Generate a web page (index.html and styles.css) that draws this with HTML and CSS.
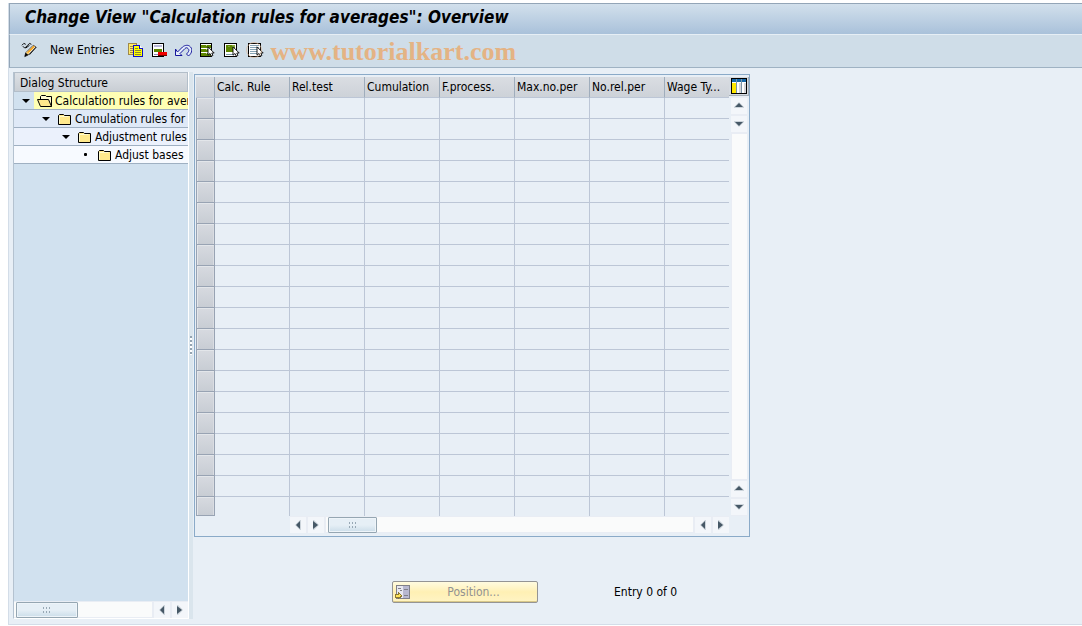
FILE: index.html
```html
<!DOCTYPE html>
<html lang="en">
<head>
<meta charset="utf-8">
<title>Change View "Calculation rules for averages": Overview</title>
<link rel="stylesheet" href="styles.css">
</head>
<body>
<svg class="defs" aria-hidden="true">
  <symbol id="left" viewBox="0 0 16 16"><path d="M10 3h1v10h-1l-5-5z" fill="#cbd3da"/><path d="M10 4v8L6 8z" fill="#465866"/></symbol>
  <symbol id="right" viewBox="0 0 16 16"><path d="M5 3h1l5 5-5 5H5z" fill="#cbd3da"/><path d="M5 4v8l5-4z" fill="#465866"/></symbol>
  <symbol id="up" viewBox="0 0 16 16"><path d="M3 9l5-5 5 5v1H3z" fill="#cbd3da"/><path d="M4 9h8L8 5z" fill="#465866"/></symbol>
  <symbol id="down" viewBox="0 0 16 16"><path d="M3 5h10v1l-5 5-5-5z" fill="#cbd3da"/><path d="M4 6h8l-4 4z" fill="#465866"/></symbol>
  <symbol id="folder" viewBox="0 0 16 14"><path d="M1.500 12.500v-9l1-1h4l1 1h6v9z" fill="#ffe98c" stroke="#000"/><path d="M2.500 11.500v-7h9" fill="none" stroke="#fffbd0"/></symbol>
  <symbol id="cursor" viewBox="0 0 8 11"><path d="M1 .8v8.400l2-1.700 1.300 2.700 1.600-.7-1.100-2.500h2.400z" fill="#fff" stroke="#000" stroke-width=".9" shape-rendering="geometricPrecision"/></symbol>
</svg>
<div class="window">
  <header class="title"><h1>Change View "Calculation rules for averages": Overview</h1></header>
  <div class="toolbar">
    <button class="tool" aria-label="Display or change">
      <svg width="17" height="16" viewBox="0 0 18 16"><path d="M1 3l2-2 2 1M2 4l2 2 3-3 2-2 2 1M5 6l4-3" fill="none" stroke="#000"/><path d="M5 11l8-8 3 2-8 8-4 2z" fill="#fff" stroke="#333"/><path d="M7 11l7-7" stroke="#f5a623" stroke-width="2"/><path d="M9 13l7-8" stroke="#111"/><path d="M4 15l1-4 3 2z" fill="#000"/><path d="M6 10l2 2" stroke="#f8c45a" stroke-width="2"/></svg>
    </button>
    <button class="tool text">New Entries</button>
    <button class="tool" aria-label="Copy as">
      <svg width="17" height="16" viewBox="0 0 17 16" shape-rendering="crispEdges"><path d="M1 1h8v11H1z" fill="#ffe96a"/><path d="M1.500 1.500h8v11h-8z" fill="none" stroke="#a08a48"/><path d="M3 4h5M3 6h4M3 8h4M3 10h4" stroke="#a08a48"/><path d="M6.500 3.500h6l3 3v8h-9z" fill="#ff0" stroke="#1010c8"/><path d="M12.500 3.500v3h3" fill="#fff" stroke="#1010c8"/><path d="M8 6.500h3M8 8.500h6M8 10.500h6M8 12.500h6" stroke="#8a8a30"/></svg>
    </button>
    <button class="tool" aria-label="Delete">
      <svg width="17" height="16" viewBox="0 0 17 16" shape-rendering="crispEdges"><path d="M1.500 1.500h11v13h-11z" fill="#fff" stroke="#000"/><path d="M3 3h8v2H3z" fill="#b8b8d8"/><path d="M3 7h8v3H3z" fill="#5d8500"/><path d="M3 12h4v1H3z" fill="#8888b8"/><path d="M7 10h9v3H7z" fill="#f00000"/><path d="M7 13h9v1H7z" fill="#700000"/></svg>
    </button>
    <button class="tool" aria-label="Undo change">
      <svg width="17" height="15" viewBox="0 0 17 15"><path d="M.5 6v6.500h6.500l-2-2 5-5c1-1 2-1 3 0 1.500 1.500 1 3-1.500 5.500l2 2c4-3.500 4-7 2-9-2-2.500-5.500-2-8 0L2.500 9z" fill="#e4eefb" stroke="#16169c"/></svg>
    </button>
    <button class="tool" aria-label="Select all">
      <svg width="17" height="16" viewBox="0 0 17 16" shape-rendering="crispEdges"><path d="M1.500 1.500h11v13h-11z" fill="#fff" stroke="#000"/><path d="M2 3h10v3H2zM2 7h10v3H2zM2 11h10v3H2z" fill="#5d8500"/><path d="M7 3h1v1H7zM7 7h1v1H7zM7 11h1v1H7z" fill="#b9d070"/><use href="#cursor" x="8" y="4" width="8" height="11"/></svg>
    </button>
    <button class="tool" aria-label="Select block">
      <svg width="17" height="16" viewBox="0 0 17 16" shape-rendering="crispEdges"><path d="M1.500 1.500h12v13h-12z" fill="#fff" stroke="#000"/><path d="M3 3h9v7H3z" fill="#5d8500"/><path d="M5 4h2v1H5zM9 3h3v2H9z" fill="#86a83a"/><path d="M3 12h7v1H3z" fill="#7898a8"/><use href="#cursor" x="9" y="4" width="8" height="11"/></svg>
    </button>
    <button class="tool" aria-label="Deselect all">
      <svg width="17" height="16" viewBox="0 0 17 16" shape-rendering="crispEdges"><path d="M1.500 1.500h12v13h-12z" fill="#fff" stroke="#000"/><path d="M3 3.500h9M3 5.500h9M3 7.500h7M3 9.500h7M3 11.500h7" stroke="#87a4b5"/><use href="#cursor" x="9" y="4" width="8" height="11"/></svg>
      <span class="ring"></span>
    </button>
    <span class="watermark">www.tutorialkart.com</span>
  </div>
  <main class="work">
    <aside class="dialog">
      <h2>Dialog Structure</h2>
      <ul class="tree">
        <li class="level1"><button class="twist" aria-label="Collapse"></button><a href="#"><svg width="16" height="14" viewBox="0 0 16 14"><path d="M3.500 7V2.500l1-1h4l1 1h5v10" fill="#fffbd0" stroke="#000"/><path d="M.5 5.500h11l3 7h-11z" fill="#ffe98c" stroke="#000"/></svg>Calculation rules for aver</a></li>
        <li class="level2"><button class="twist" aria-label="Collapse"></button><a href="#"><svg width="16" height="14"><use href="#folder"/></svg>Cumulation rules for</a></li>
        <li class="level3"><button class="twist" aria-label="Collapse"></button><a href="#"><svg width="16" height="14"><use href="#folder"/></svg>Adjustment rules</a></li>
        <li class="level4"><span class="dot"></span><a href="#"><svg width="16" height="14"><use href="#folder"/></svg>Adjust bases</a></li>
      </ul>
      <div class="hbar">
        <div class="track"><div class="thumb wide"><i></i></div></div>
        <button class="arrow" aria-label="Scroll left"><svg><use href="#left"/></svg></button>
        <button class="arrow" aria-label="Scroll right"><svg><use href="#right"/></svg></button>
      </div>
    </aside>
    <div class="splitter"><i></i></div>
    <section class="content">
      <div class="gridbox">
        <table>
          <colgroup><col class="c-sel"><col class="c"><col class="c"><col class="c"><col class="c"><col class="c"><col class="c"><col></colgroup>
          <thead><tr><th class="sel"></th><th>Calc. Rule</th><th>Rel.test</th><th>Cumulation</th><th>F.process.</th><th>Max.no.per</th><th>No.rel.per</th><th>Wage Ty...</th></tr></thead>
          <tbody>
            <tr><td class="sel"></td><td></td><td></td><td></td><td></td><td></td><td></td><td></td></tr>
            <tr><td class="sel"></td><td></td><td></td><td></td><td></td><td></td><td></td><td></td></tr>
            <tr><td class="sel"></td><td></td><td></td><td></td><td></td><td></td><td></td><td></td></tr>
            <tr><td class="sel"></td><td></td><td></td><td></td><td></td><td></td><td></td><td></td></tr>
            <tr><td class="sel"></td><td></td><td></td><td></td><td></td><td></td><td></td><td></td></tr>
            <tr><td class="sel"></td><td></td><td></td><td></td><td></td><td></td><td></td><td></td></tr>
            <tr><td class="sel"></td><td></td><td></td><td></td><td></td><td></td><td></td><td></td></tr>
            <tr><td class="sel"></td><td></td><td></td><td></td><td></td><td></td><td></td><td></td></tr>
            <tr><td class="sel"></td><td></td><td></td><td></td><td></td><td></td><td></td><td></td></tr>
            <tr><td class="sel"></td><td></td><td></td><td></td><td></td><td></td><td></td><td></td></tr>
            <tr><td class="sel"></td><td></td><td></td><td></td><td></td><td></td><td></td><td></td></tr>
            <tr><td class="sel"></td><td></td><td></td><td></td><td></td><td></td><td></td><td></td></tr>
            <tr><td class="sel"></td><td></td><td></td><td></td><td></td><td></td><td></td><td></td></tr>
            <tr><td class="sel"></td><td></td><td></td><td></td><td></td><td></td><td></td><td></td></tr>
            <tr><td class="sel"></td><td></td><td></td><td></td><td></td><td></td><td></td><td></td></tr>
            <tr><td class="sel"></td><td></td><td></td><td></td><td></td><td></td><td></td><td></td></tr>
            <tr><td class="sel"></td><td></td><td></td><td></td><td></td><td></td><td></td><td></td></tr>
            <tr><td class="sel"></td><td></td><td></td><td></td><td></td><td></td><td></td><td></td></tr>
            <tr><td class="sel"></td><td></td><td></td><td></td><td></td><td></td><td></td><td></td></tr>
            <tr><td class="sel"></td><td></td><td></td><td></td><td></td><td></td><td></td><td></td></tr>
          </tbody>
        </table>
        <div class="vbar">
          <button class="config" aria-label="Configuration"><svg width="16" height="16" viewBox="0 0 16 16" shape-rendering="crispEdges"><path d="M1 1h14v14H1z" fill="#fff"/><path d="M1 1h14v3H1z" fill="#1668a8"/><path d="M1 5h4v10H1z" fill="#ffe800"/><path d="M6 5h4v10H6zM11 5h4v10h-4z" fill="#d5d5d9"/><path d="M5 1h1v14H5zM10 1h1v14h-1z" fill="#7a94a8"/><path d="M6 5h2v10H6zM11 5h2v10h-2z" fill="#fff"/><path d="M.5.5h15v15H.5z" fill="none" stroke="#000"/></svg></button>
          <button class="arrow" aria-label="Scroll up"><svg><use href="#up"/></svg></button>
          <button class="arrow" aria-label="Page up"><svg><use href="#down"/></svg></button>
          <div class="vtrack"></div>
          <button class="arrow" aria-label="Page down"><svg><use href="#up"/></svg></button>
          <button class="arrow" aria-label="Scroll down"><svg><use href="#down"/></svg></button>
        </div>
        <div class="hbar grid-hbar">
          <button class="arrow" aria-label="First column"><svg><use href="#left"/></svg></button>
          <button class="arrow" aria-label="Next column"><svg><use href="#right"/></svg></button>
          <div class="track"><div class="thumb"><i></i></div></div>
          <button class="arrow" aria-label="Previous column"><svg><use href="#left"/></svg></button>
          <button class="arrow" aria-label="Last column"><svg><use href="#right"/></svg></button>
        </div>
      </div>
      <div class="footer">
        <button class="position" disabled>
          <svg width="16" height="16" viewBox="0 0 16 16" shape-rendering="crispEdges"><path d="M2.500 1.500h13v13h-13z" fill="#e8e8f0" stroke="#808088"/><path d="M9 2h6v12H9z" fill="#b8b8d0"/><path d="M4 4h3M6 6h2M10 5h4M10 11h4" stroke="#808088"/><path d="M1 10h3V8l4 4-4 3v-2H1z" fill="#ffe45a" stroke="#8c7830"/></svg>
          <span>Position...</span>
        </button>
        <span>Entry 0 of 0</span>
      </div>
    </section>
  </main>
</div>
</body>
</html>
```
FILE: styles.css
```css
* { box-sizing: border-box; }
body {
  margin: 0;
  padding: 3px 0 1px 8px;
  min-height: 100vh;
  display: flex;
  background: #fff;
  color: #000;
  font: 12px/18px "DejaVu Sans Condensed", "DejaVu Sans", sans-serif;
}
.defs { display: none; }
button { margin: 0; padding: 0; border: 0; background: none; font: inherit; color: inherit; }
svg { display: block; flex: none; }
.window {
  flex: 1;
  min-width: 0;
  display: flex;
  flex-direction: column;
  border-left: 1px solid #d3dde8;
  border-bottom: 1px solid #d3dde8;
  background: #e8eff6;
}
.title {
  height: 31px;
  padding-left: 15px;
  border-top: 1px solid #93a5b7;
  border-left: 1px solid #93a5b7;
  background: linear-gradient(#d2e0ec, #a9c1da);
}
h1 { margin: 0; font-size: 17px; line-height: 26px; font-style: italic; font-weight: bold; white-space: nowrap; }
.toolbar {
  height: 34px;
  display: flex;
  align-items: center;
  padding: 0 0 2px 11px;
  gap: 7px;
  border-top: 1px solid #e6eef5;
  border-left: 1px solid #93a5b7;
  border-bottom: 1px solid #9fb2c3;
  background: #cfdde8;
}
.tool { position: relative; flex: none; }
.tool.text { margin: 0 5px; }
.ring { position: absolute; left: -1px; top: 0; width: 16px; height: 16px; border: 1px solid #e2b58e; border-radius: 50%; opacity: .6; }
.watermark { padding-top: 4px; font: bold 26px/28px "Liberation Serif", serif; color: #e4b384; }
.work { flex: 1; display: flex; padding: 4px 0 5px 4px; }
.dialog {
  width: 176px;
  flex: none;
  display: flex;
  flex-direction: column;
  border-left: 1px solid #b4c2d0;
  border-right: 1px solid #fff;
  border-bottom: 1px solid #fff;
  background: #d1e1ef;
}
h2 {
  margin: 0;
  height: 20px;
  padding-left: 5px;
  border: 1px solid #b3bec9;
  background: linear-gradient(#dde1e6, #c9ced4);
  font-size: 12px;
  line-height: 20px;
  font-weight: normal;
}
.tree { flex: 1; margin: 0; padding: 0; list-style: none; }
.tree li { height: 18px; display: flex; align-items: center; overflow: hidden; border-bottom: 1px solid #9fb0c2; }
.tree a { flex: 1; display: flex; align-items: center; gap: 2px; height: 17px; padding-left: 3px; line-height: 20px; color: inherit; text-decoration: none; white-space: nowrap; }
.level1 a { background: #ffffb4; }
.level2 { background: #dfe9f7; padding-left: 20px; }
.level3 { background: #ebf1fc; padding-left: 40px; }
.level4 { background: #f7faff; padding-left: 60px; }
.twist, .dot { width: 20px; height: 17px; flex: none; display: grid; place-items: center; }
.twist { padding-left: 3px; }
.twist::before { content: ""; border: 4px solid transparent; border-top-color: #000; border-bottom: 0; }
.dot::before { content: ""; width: 3px; height: 3px; border-radius: 1px; background: #000; margin-left: 3px; }
.hbar { display: flex; align-items: center; gap: 2px; height: 17px; background: #e9edf4; }
.arrow { width: 16px; height: 16px; flex: none; background: #f3f6fa; }
.arrow svg { width: 16px; height: 16px; }
.track { flex: 1; height: 15px; background: #fafbfb; padding-left: 2px; }
.thumb {
  width: 49px;
  height: 16px;
  display: grid;
  place-items: center;
  border: 1px solid #95a6b2;
  border-radius: 1px;
  background: linear-gradient(#e6eff6 50%, #cbdde9);
  box-shadow: inset 0 0 0 1px #eef4f9;
}
.thumb.wide { width: 62px; }
.thumb i { width: 8px; height: 6px; background: repeating-linear-gradient(90deg, #97a8b5 0 1px, transparent 1px 3px) 0 0 / 100% 2px no-repeat, repeating-linear-gradient(90deg, #97a8b5 0 1px, transparent 1px 3px) 0 100% / 100% 2px no-repeat; }
.splitter { width: 4px; flex: none; display: grid; place-items: center; background: #dae5ed; }
.splitter i { width: 2px; height: 19px; background: repeating-linear-gradient(#93a3b0 0 2px, #fff 2px 4px); }
.content { flex: 1; min-width: 0; padding: 2px 0 0 1px; }
.gridbox {
  width: 556px;
  display: grid;
  grid-template-columns: 1fr 20px;
  padding: 2px 0 2px 1px;
  border: 1px solid #8aaac8;
}
table { width: 100%; table-layout: fixed; border-collapse: separate; border-spacing: 0; }
.c-sel { width: 19px; }
.c { width: 75px; }
th {
  height: 21px;
  padding: 1px 0 0 2px;
  line-height: 19px;
  text-align: left;
  font-weight: normal;
  white-space: nowrap;
  border-right: 1px solid #9fadbc;
  border-bottom: 1px solid #bcc6d6;
  background: linear-gradient(#dadde2, #cdd2d8);
}
td { height: 21px; padding: 0; border-right: 1px solid #bcc6d6; border-bottom: 1px solid #bcc6d6; }
th:last-child, td:last-child { border-right: 0; }
tbody tr:last-child td { height: 19px; border-bottom: 0; }
td.sel, tbody tr:last-child td.sel {
  border: 1px solid #98a3b3;
  border-top: 0;
  background: linear-gradient(#d7dae0, #c8cdd4);
  box-shadow: inset 1px 1px 0 #e3e6ea, inset -1px 0 0 #dadde2;
}
.vbar { display: flex; flex-direction: column; align-items: center; gap: 2px; padding-bottom: 1px; background: linear-gradient(#e9edf4, #e9edf4) center / 16px 100% no-repeat; }
.config { width: 20px; height: 19px; display: grid; place-items: center; background: #d5dae0; border-right: 1px solid #a5afb9; border-bottom: 1px solid #a5afb9; }
.vtrack { flex: 1; width: 15px; background: #fafbfb; }
.grid-hbar { margin: 0 0 1px 94px; }
.footer { display: flex; align-items: center; gap: 76px; margin: 44px 0 0 198px; }
.position {
  width: 146px;
  height: 22px;
  display: flex;
  align-items: center;
  padding-left: 1px;
  border: 1px solid #949494;
  border-radius: 2px;
  background: linear-gradient(#fffbe0, #fff0b4 50%, #fff4c4);
  box-shadow: inset 0 -1px 0 #d8c88a;
  color: #929292;
}
.position span { flex: 1; }
```
